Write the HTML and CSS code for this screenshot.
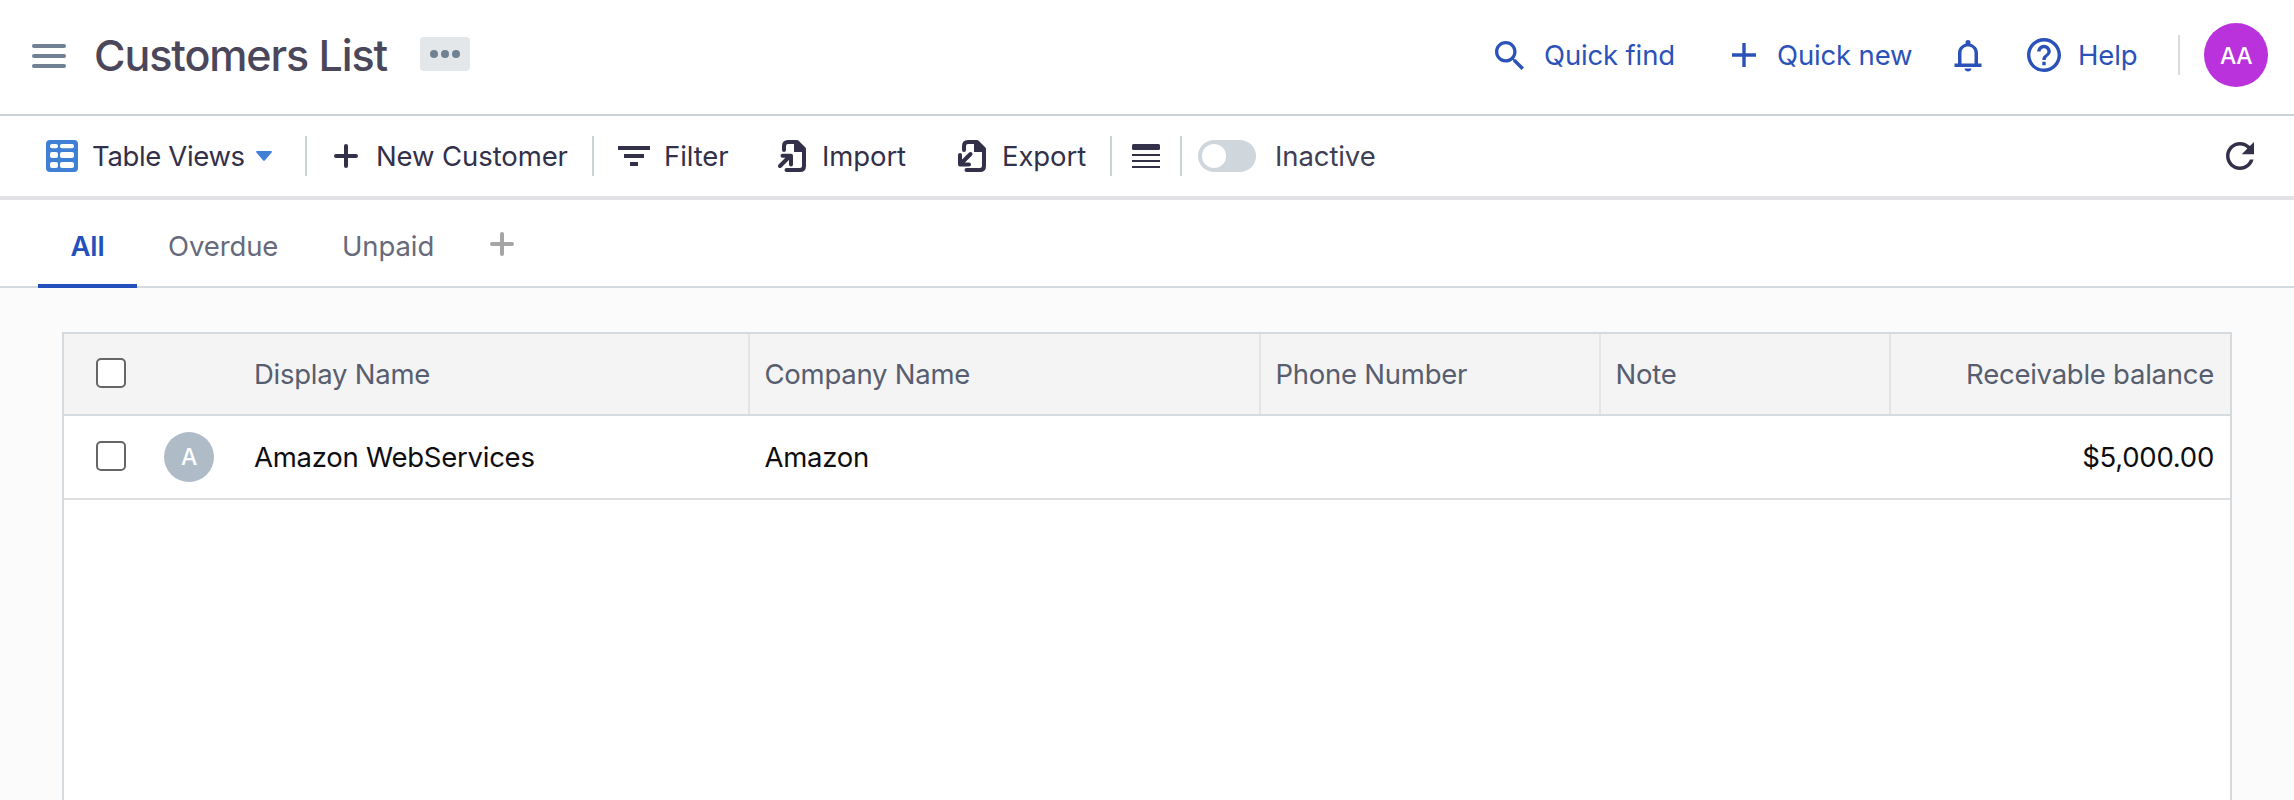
FILE: index.html
```html
<!DOCTYPE html>
<html>

<head>
    <title>Customers List</title>
    <meta charset="utf-8">
    <link rel="stylesheet" href="styles.css">
</head>

<body>
    <header class="topbar">
        <div class="hamburger"><span></span><span></span><span></span></div>
        <h1>Customers List</h1>
        <div class="more"><i></i><i></i><i></i></div>

        <nav class="actions">
            <a class="quick-find">
                <svg width="29" height="29" viewBox="3 3 17.5 17.5"><path d="M15.5 14h-.79l-.28-.27C15.41 12.59 16 11.11 16 9.5 16 5.91 13.09 3 9.5 3S3 5.91 3 9.5 5.91 16 9.5 16c1.61 0 3.09-.59 4.23-1.57l.27.28v.79l5 4.99L20.49 19l-4.99-5zm-6 0C7.01 14 5 11.99 5 9.5S7.01 5 9.5 5 14 7.01 14 9.5 11.99 14 9.5 14z"/></svg>
                <span>Quick find</span>
            </a>
            <a class="quick-new">
                <svg width="24" height="24" viewBox="0 0 24 24"><path d="M10.3 0h3.4v10.3H24v3.4H13.700V24h-3.400V13.700H0v-3.400h10.300z"/></svg>
                <span>Quick new</span>
            </a>
            <a class="bell">
                <svg width="28" height="33" viewBox="0 0 28 33"><path d="M11.5 3.5a2.5 2.5 0 0 1 5 0v1.2C21.3 6 24 9.7 24 14v10.5h3.5V28H.5v-3.5H4V14C4 9.7 6.7 6 11.5 4.7zM7.5 24.5h13V14c0-4-2.7-6.5-6.5-6.5S7.5 10 7.5 14zM10.5 29.5h7c-.3 2-1.7 3-3.5 3s-3.2-1-3.5-3z"/></svg>
            </a>
            <a class="help">
                <svg width="34" height="34" viewBox="2 2 20 20"><path d="M11 18h2v-2h-2v2zm1-16C6.48 2 2 6.48 2 12s4.48 10 10 10 10-4.48 10-10S17.52 2 12 2zm0 18c-4.41 0-8-3.59-8-8s3.59-8 8-8 8 3.59 8 8-3.59 8-8 8zm0-14c-2.21 0-4 1.79-4 4h2c0-1.1.9-2 2-2s2 .9 2 2c0 2-3 1.75-3 5h2c0-2.25 3-2.5 3-5 0-2.21-1.79-4-4-4z"/></svg>
                <span>Help</span>
            </a>
            <div class="user">AA</div>
        </nav>
    </header>

    <div class="toolbar">
        <div class="tool views">
            <svg width="32" height="32" viewBox="0 0 32 32">
                <rect width="32" height="32" rx="4" fill="#3f80d6"/>
                <g fill="#fff">
                    <rect x="4" y="4" width="8" height="4.3" rx="2"/><rect x="14" y="4" width="14" height="4.3" rx="2"/>
                    <rect x="4" y="12" width="8" height="6" rx="2"/><rect x="14" y="12" width="14" height="6" rx="2"/>
                    <rect x="4" y="22" width="8" height="6" rx="2"/><rect x="14" y="22" width="14" height="6" rx="2"/>
                </g>
            </svg>
            <span>Table Views</span>
            <svg class="caret" width="16" height="10" viewBox="0 0 16 10"><path fill="#3f80d6" d="M1 0h14q1.5.3.6 1.5L9 9.3q-1 1-2 0L.4 1.5Q-.4.3 1 0z"/></svg>
        </div>
        <div class="tool new">
            <svg width="24" height="24" viewBox="0 0 24 24"><path d="M2 12h20M12 2v20" stroke="#33304a" stroke-width="4" stroke-linecap="round"/></svg>
            <span>New Customer</span>
        </div>
        <div class="tool filter">
            <svg width="32" height="20" viewBox="0 0 32 20"><path d="M0 0h32v4H0zM6 8h20v4H6zM12 16h8v4h-8z"/></svg>
            <span>Filter</span>
        </div>
        <div class="tool import">
            <svg width="28" height="32" viewBox="0 0 28 32">
                <path class="line" d="M6 10V6q0-4 4-4h9l7 7v17q0 4-4 4H8.5M2 26 12 16M4.5 15.7H13V24.5"/>
                <path d="M16 1h3l8 8v3H16z"/>
            </svg>
            <span>Import</span>
        </div>
        <div class="tool export">
            <svg width="28" height="32" viewBox="0 0 28 32">
                <path class="line" d="M6 10V6q0-4 4-4h9l7 7v17q0 4-4 4H8.5M12.5 14 3 23.5M2 15v9.5h9"/>
                <path d="M16 1h3l8 8v3H16z"/>
            </svg>
            <span>Export</span>
        </div>
        <div class="tool density">
            <svg width="28" height="24" viewBox="0 0 28 24"><rect width="28" height="6" rx="1.5"/><path d="M0 10h28v2H0zM0 16h28v2H0zM0 22h28v2H0z"/></svg>
        </div>
        <div class="tool inactive">
            <div class="switch"></div>
            <span>Inactive</span>
        </div>
        <svg class="refresh" width="28" height="28" viewBox="4 4 16 16"><path d="M17.65 6.35C16.2 4.9 14.21 4 12 4c-4.42 0-7.99 3.58-7.99 8s3.57 8 7.99 8c3.73 0 6.84-2.55 7.73-6h-2.08c-.82 2.33-3.04 4-5.65 4-3.31 0-6-2.69-6-6s2.69-6 6-6c1.66 0 3.14.69 4.22 1.78L13 11h7V4l-2.35 2.35z"/></svg>
    </div>

    <div class="tabs">
        <div class="tab active">All</div>
        <div class="tab overdue">Overdue</div>
        <div class="tab unpaid">Unpaid</div>
        <svg width="24" height="24" viewBox="0 0 24 24"><path d="M2 12h20M12 2v20" stroke="#a5a5a5" stroke-width="4" stroke-linecap="round"/></svg>
    </div>

    <div class="content">
        <div class="table">
            <div class="row head">
                <div class="cell first"><span class="check"></span>Display Name</div>
                <div class="cell">Company Name</div>
                <div class="cell">Phone Number</div>
                <div class="cell">Note</div>
                <div class="cell right">Receivable balance</div>
            </div>
            <div class="row">
                <div class="cell first"><span class="check"></span><span class="avatar">A</span>Amazon WebServices</div>
                <div class="cell">Amazon</div>
                <div class="cell"></div>
                <div class="cell"></div>
                <div class="cell right">$5,000.00</div>
            </div>
        </div>
    </div>
</body>

</html>
```

FILE: styles.css
```css
body {
    margin: 0;
    height: 800px;
    overflow: hidden;
    display: flex;
    flex-direction: column;
    background-color: #fbfbfb;
    font-family: Inter, "Liberation Sans", sans-serif;
    font-size: 27.5px;
    line-height: 34px;
    letter-spacing: -0.1px;
    white-space: nowrap;
    color: #33304a;
}

svg {
    display: block;
    flex: none;
    fill: #33304a;
}

/* header */
.topbar {
    height: 114px;
    display: flex;
    align-items: center;
    background-color: #fff;
    border-bottom: 2px solid #ccd3d7;
}

.hamburger {
    width: 34px;
    margin: 0 28px 2px 32px;
    display: flex;
    flex-direction: column;
    gap: 6px;
}

.hamburger span {
    height: 4px;
    border-radius: 2px;
    background-color: #6f8192;
}

h1 {
    width: 326px;
    margin: 0 0 5px;
    font-size: 43px;
    font-weight: 550;
    line-height: 52px;
    letter-spacing: -1.1px;
    color: #4b475b;
}

.more {
    width: 50px;
    height: 34px;
    margin-bottom: 6px;
    display: flex;
    align-items: center;
    justify-content: center;
    gap: 3px;
    border-radius: 4px;
    background-color: #e3e7ea;
}

.more i {
    width: 8px;
    height: 8px;
    border-radius: 50%;
    background-color: #6f8192;
}

.actions {
    flex: 1;
    height: 64px;
    margin: 0 26px 4px 0;
    display: flex;
    align-items: center;
    justify-content: flex-end;
    letter-spacing: -0.15px;
    color: #2b52b8;
}

.actions a {
    display: flex;
    align-items: center;
}

.actions svg {
    fill: #2b52b8;
}

.quick-find {
    width: 237px;
    gap: 20px;
}

.quick-new {
    width: 222px;
    gap: 21px;
}

.bell {
    width: 73px;
}

.help {
    width: 151px;
    gap: 17px;
}

.user {
    position: relative;
    width: 64px;
    height: 64px;
    margin-left: 26px;
    border-radius: 50%;
    background-color: #b932dc;
    color: #fff;
    font-size: 23px;
    font-weight: 500;
    line-height: 66px;
    letter-spacing: -0.5px;
    text-align: center;
}

.user::before {
    content: "";
    position: absolute;
    left: -26px;
    top: 12px;
    width: 2px;
    height: 40px;
    background-color: #d9dbdd;
}

/* toolbar */
.toolbar {
    height: 80px;
    padding: 0 40px 0 46px;
    display: flex;
    align-items: center;
    background-color: #fff;
    border-bottom: 4px solid #e1e1e6;
}

.tool {
    height: 40px;
    box-sizing: border-box;
    display: flex;
    align-items: center;
}

.views,
.new,
.export,
.density {
    border-right: 2px solid #ccd3d7;
}

.views {
    width: 261px;
    gap: 14px;
    letter-spacing: -0.35px;
}

.views span {
    width: 150px;
}

.new {
    width: 287px;
    padding-left: 27px;
    gap: 18px;
}

.filter {
    width: 184px;
    padding-left: 24px;
    gap: 14px;
}

.import {
    width: 180px;
    gap: 16px;
}

.export {
    width: 154px;
    gap: 16px;
}

.density {
    width: 70px;
    padding-left: 20px;
}

.inactive {
    padding-left: 16px;
    gap: 19px;
    color: #403d54;
}

.line {
    fill: none;
    stroke: #33304a;
    stroke-width: 4;
    stroke-linecap: round;
    stroke-linejoin: round;
}

.switch {
    width: 58px;
    height: 32px;
    padding: 4px;
    box-sizing: border-box;
    border-radius: 16px;
    background-color: #cfd6dc;
}

.switch::before {
    content: "";
    display: block;
    width: 24px;
    height: 24px;
    border-radius: 50%;
    background-color: #fff;
}

.refresh {
    margin-left: auto;
}

/* tabs */
.tabs {
    height: 86px;
    padding-left: 38px;
    display: flex;
    align-items: center;
    background-color: #fff;
    border-bottom: 2px solid #d5dade;
    color: #666a7b;
}

.tabs svg {
    margin-top: 2px;
}

.tab {
    padding-top: 5px;
}

.tab.active {
    width: 99px;
    height: 88px;
    margin-bottom: -2px;
    box-sizing: border-box;
    border-bottom: 4px solid #2450bd;
    line-height: 82px;
    text-align: center;
    font-weight: 600;
    color: #2450bd;
}

.overdue {
    width: 174px;
    padding-left: 31px;
}

.unpaid {
    width: 148px;
}

/* table */
.content {
    flex: 1;
    padding: 44px 62px 0;
}

.table {
    height: 100%;
    background-color: #fff;
    border: 2px solid #d5dade;
    border-bottom: none;
    box-sizing: border-box;
}

.row {
    display: grid;
    grid-template-columns: 686px 511px 340px 290px 1fr;
    height: 82px;
    border-bottom: 2px solid #dddfe1;
    letter-spacing: -0.25px;
    color: #0e0e10;
}

.head {
    height: 80px;
    background-color: #f4f4f4;
    border-color: #d5dce0;
    color: #565e70;
}

.cell {
    padding: 0 16px 0 14.5px;
    display: flex;
    align-items: center;
}

.head .cell {
    border-right: 2px solid #e2e5e7;
}

.head .cell:last-child {
    border-right: none;
}

.cell.first {
    padding-left: 32px;
}

.cell.right {
    justify-content: flex-end;
}

.check {
    width: 30px;
    height: 30px;
    margin: 0 128px 2px 0;
    box-sizing: border-box;
    border: 2px solid #666;
    border-radius: 5px;
    background-color: #fff;
}

.row:not(.head) .check {
    margin-right: 38px;
}

.avatar {
    width: 50px;
    margin-right: 40px;
    border-radius: 50%;
    background-color: #b0bbc8;
    color: #fff;
    font-size: 23px;
    font-weight: 500;
    line-height: 50px;
    text-align: center;
}
```
